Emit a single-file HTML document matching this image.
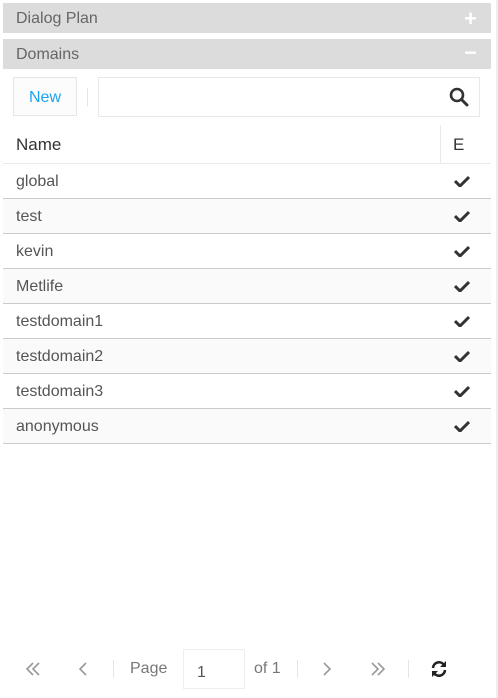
<!DOCTYPE html>
<html><head><style>
body{margin:0;width:498px;height:698px;background:#fff;font-family:"Liberation Sans",sans-serif;position:relative;overflow:hidden;color:#444}
.bar{position:absolute;left:3px;width:488px;height:30px;background:#dcdcdc;color:#666;font-size:16px;line-height:31px;padding-left:13px;box-sizing:border-box}
.bar span{position:absolute;right:14px;top:0;color:#fff;font-size:22px;font-weight:bold}
.rb{position:absolute;right:0;top:0;width:2px;height:698px;background:#eee}
.row{position:absolute;left:3px;width:488px;height:35px;border-bottom:1px solid #ccc;box-sizing:border-box;font-size:16px;line-height:36px;padding-left:13px;color:#555}
.row svg{position:absolute;right:21px;top:11px}
.alt{background:#fafafa}
.pg{position:absolute;top:660px;font-size:16px;color:#777}
.sep{position:absolute;top:660px;width:1px;height:18px;background:#e5e5e5}
</style></head><body>
<div class="rb"></div>
<div class="bar" style="top:3px">Dialog Plan<span>+</span></div>
<div class="bar" style="top:39px">Domains<span style="top:-2px">−</span></div>
<div style="position:absolute;left:13px;top:77px;width:64px;height:39px;border:1px solid #e5e5e5;box-sizing:border-box;background:#fcfcfc;color:#1aa3f0;font-size:16px;text-align:center;line-height:40px">New</div>
<div style="position:absolute;left:87px;top:88px;width:1px;height:18px;background:#e5e5e5"></div>
<div style="position:absolute;left:98px;top:77px;width:382px;height:40px;border:1px solid #e8e8e8;box-sizing:border-box"></div>
<svg style="position:absolute;left:449px;top:87px" width="20" height="20" viewBox="0 0 20 20"><circle cx="8" cy="8" r="6" fill="none" stroke="#333" stroke-width="2.6"/><line x1="12.5" y1="12.5" x2="18" y2="18" stroke="#333" stroke-width="3" stroke-linecap="round"/></svg>
<div style="position:absolute;left:3px;top:125px;width:488px;height:39px;border-bottom:1px solid #eaeaea;box-sizing:border-box;font-size:17px;line-height:39px;padding-left:13px;color:#333">Name<div style="position:absolute;left:437px;top:0;width:1px;height:38px;background:#eaeaea"></div><span style="position:absolute;left:450px">E</span></div>
<div class="row" style="top:164px">global<svg width="16" height="12" viewBox="0 0 16 12"><path d="M1 6l5 5 9-9" fill="none" stroke="#333" stroke-width="3"/></svg></div>
<div class="row alt" style="top:199px">test<svg width="16" height="12" viewBox="0 0 16 12"><path d="M1 6l5 5 9-9" fill="none" stroke="#333" stroke-width="3"/></svg></div>
<div class="row" style="top:234px">kevin<svg width="16" height="12" viewBox="0 0 16 12"><path d="M1 6l5 5 9-9" fill="none" stroke="#333" stroke-width="3"/></svg></div>
<div class="row alt" style="top:269px">Metlife<svg width="16" height="12" viewBox="0 0 16 12"><path d="M1 6l5 5 9-9" fill="none" stroke="#333" stroke-width="3"/></svg></div>
<div class="row" style="top:304px">testdomain1<svg width="16" height="12" viewBox="0 0 16 12"><path d="M1 6l5 5 9-9" fill="none" stroke="#333" stroke-width="3"/></svg></div>
<div class="row alt" style="top:339px">testdomain2<svg width="16" height="12" viewBox="0 0 16 12"><path d="M1 6l5 5 9-9" fill="none" stroke="#333" stroke-width="3"/></svg></div>
<div class="row" style="top:374px">testdomain3<svg width="16" height="12" viewBox="0 0 16 12"><path d="M1 6l5 5 9-9" fill="none" stroke="#333" stroke-width="3"/></svg></div>
<div class="row alt" style="top:409px">anonymous<svg width="16" height="12" viewBox="0 0 16 12"><path d="M1 6l5 5 9-9" fill="none" stroke="#333" stroke-width="3"/></svg></div>
<svg style="position:absolute;left:25px;top:662px" width="16" height="14" viewBox="0 0 16 14"><path d="M8 1L2 7l6 6M14 1L8 7l6 6" fill="none" stroke="#999" stroke-width="1.6"/></svg>
<svg style="position:absolute;left:78px;top:662px" width="10" height="14" viewBox="0 0 10 14"><path d="M8 1L2 7l6 6" fill="none" stroke="#999" stroke-width="1.6"/></svg>
<div class="sep" style="left:113px"></div>
<div class="pg" style="left:130px">Page</div>
<div style="position:absolute;left:183px;top:649px;width:62px;height:40px;border:1px solid #eee;box-sizing:border-box;font-size:16px;color:#555;padding:14px 0 0 13px">1</div>
<div class="pg" style="left:254px">of 1</div>
<div class="sep" style="left:297px"></div>
<svg style="position:absolute;left:322px;top:662px" width="10" height="14" viewBox="0 0 10 14"><path d="M2 1l6 6-6 6" fill="none" stroke="#999" stroke-width="1.6"/></svg>
<svg style="position:absolute;left:370px;top:662px" width="16" height="14" viewBox="0 0 16 14"><path d="M2 1l6 6-6 6M8 1l6 6-6 6" fill="none" stroke="#999" stroke-width="1.6"/></svg>
<div class="sep" style="left:408px"></div>
<svg style="position:absolute;left:430px;top:660px" width="18" height="18" viewBox="0 0 18 18"><path d="M3 8a6 6 0 0 1 11-3M15 10a6 6 0 0 1-11 3" fill="none" stroke="#222" stroke-width="2.6"/><path d="M16 1v6h-6z M2 17v-6h6z" fill="#222"/></svg>
</body></html>
